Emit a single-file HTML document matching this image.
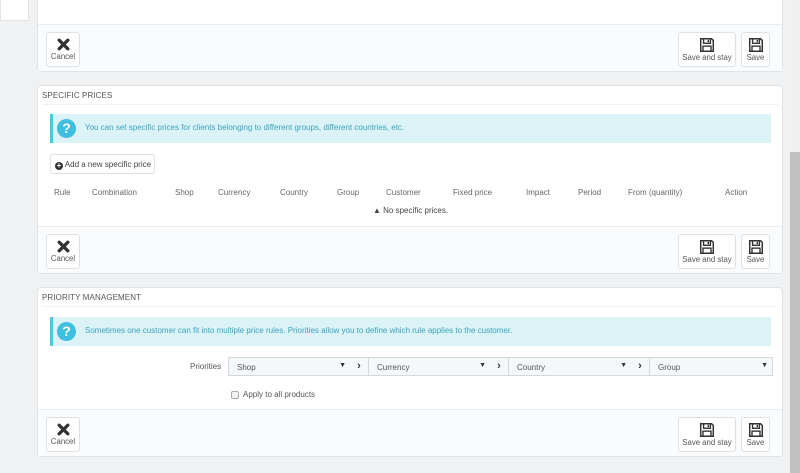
<!DOCTYPE html>
<html><head><style>
*{box-sizing:border-box;margin:0;padding:0}
body{width:800px;height:473px;background:#eff1f2;font-family:"Liberation Sans",sans-serif;font-size:8px;color:#555;position:relative;overflow:hidden}
.abs{position:absolute}
.panel{position:absolute;left:37px;width:746px;background:#fff;border:1px solid #dfe3e6;border-radius:4px}
.foot{position:absolute;left:0;right:0;bottom:0;background:#fafbfc;border-top:1px solid #eaedef}
.btn{position:absolute;background:#fff;border:1px solid #dde1e4;border-radius:3px;text-align:center;font-size:7.8px;color:#555}
.btn svg{display:block;margin:5px auto 1px}
.hdr{position:absolute;left:4px;top:5px;font-size:8px;letter-spacing:.1px;color:#555}
.hline{position:absolute;left:4px;right:4px;border-top:1px solid #eef0f2}
.alert{position:absolute;left:12px;width:721px;height:29px;background:#dbf2f7;border-left:3px solid #52c4dd;color:#3da4bb;font-size:8px}
.alert .q{position:absolute;left:4px;top:5px;width:19px;height:19px;border-radius:50%;background:#3ebfe0;color:#fff;font-weight:bold;font-size:14px;text-align:center;line-height:19px}
.alert span{position:absolute;left:32px;top:9px}
.th{position:absolute;top:188px;font-size:8px;color:#666}
.sel{position:absolute;top:357px;height:19px;background:#f4f8fb;border:1px solid #d3d8db;font-size:8px;color:#555;padding:5px 0 0 8px}
.sel b{position:absolute;right:4px;top:4px;font-size:7px;color:#333}
.arr{position:absolute;top:357px;width:18px;height:19px;background:#f4f8fb;border-top:1px solid #d3d8db;border-bottom:1px solid #d3d8db;font-weight:bold;color:#333;text-align:center;font-size:11px;line-height:17px}
</style></head><body>
<div class="abs" style="left:0;top:0;width:29px;height:21px;background:#fff;border:1px solid #dfe3e6;border-top:0"></div>
<div class="abs" style="left:790px;top:152px;width:10px;height:321px;background:#c1c1c1"></div>
<div class="abs" style="left:790px;top:0;width:10px;height:152px;background:#f0f0f0"></div>

<div class="panel" style="top:-5px;height:77px">
 <div class="foot" style="height:47px"></div>
</div>

<div class="panel" style="top:85px;height:189px">
 <div class="hdr">SPECIFIC PRICES</div>
 <div class="hline" style="top:18px"></div>
 <div class="alert" style="top:28px"><div class="q">?</div><span>You can set specific prices for clients belonging to different groups, different countries, etc.</span></div>
 <div class="abs" style="left:12px;top:68px;width:105px;height:20px;border:1px solid #dde1e4;border-radius:3px;font-size:8px;color:#444;padding:5px 0 0 4px;white-space:nowrap"><span style="display:inline-block;width:8px;height:8px;border-radius:50%;background:#333;color:#fff;font-size:8px;line-height:8px;text-align:center;font-weight:bold;vertical-align:-1px">+</span> Add a new specific price</div>
 <div class="foot" style="height:47px"></div>
</div>
<div class="th" style="left:54px">Rule</div>
<div class="th" style="left:92px">Combination</div>
<div class="th" style="left:175px">Shop</div>
<div class="th" style="left:218px">Currency</div>
<div class="th" style="left:280px">Country</div>
<div class="th" style="left:337px">Group</div>
<div class="th" style="left:386px">Customer</div>
<div class="th" style="left:453px">Fixed price</div>
<div class="th" style="left:526px">Impact</div>
<div class="th" style="left:578px">Period</div>
<div class="th" style="left:628px">From (quantity)</div>
<div class="th" style="left:725px">Action</div>
<div class="abs" style="left:373px;top:206px;font-size:8px;color:#444">&#9650; No specific prices.</div>

<div class="panel" style="top:287px;height:170px">
 <div class="hdr">PRIORITY MANAGEMENT</div>
 <div class="hline" style="top:18px"></div>
 <div class="alert" style="top:29px"><div class="q">?</div><span>Sometimes one customer can fit into multiple price rules. Priorities allow you to define which rule applies to the customer.</span></div>
 <div class="foot" style="height:47px"></div>
</div>
<div class="abs" style="left:190px;top:362px;font-size:8px;color:#555">Priorities</div>
<div class="sel" style="left:228px;width:123px">Shop<b>&#9660;</b></div>
<div class="arr" style="left:350px">&#8250;</div>
<div class="sel" style="left:368px;width:123px">Currency<b>&#9660;</b></div>
<div class="arr" style="left:490px">&#8250;</div>
<div class="sel" style="left:508px;width:124px">Country<b>&#9660;</b></div>
<div class="arr" style="left:631px">&#8250;</div>
<div class="sel" style="left:649px;width:124px">Group<b>&#9660;</b></div>
<div class="abs" style="left:231px;top:391px;width:8px;height:8px;border:1px solid #aaa;border-radius:2px;background:#f4f4f4"></div>
<div class="abs" style="left:243px;top:390px;font-size:8px;color:#555">Apply to all products</div>

<svg width="0" height="0" style="position:absolute"><defs>
<symbol id="x" viewBox="0 0 12 12"><path d="M2 2L10 10M10 2L2 10" stroke="#333" stroke-width="3" stroke-linecap="round"/></symbol>
<symbol id="f" viewBox="0 0 14 14"><path d="M1.5 1.5H11L12.5 3V12.5H1.5Z" fill="none" stroke="#333" stroke-width="1.3"/><rect x="4" y="1.5" width="6" height="4" fill="none" stroke="#333" stroke-width="1.2"/><rect x="7.5" y="2.5" width="1.3" height="2" fill="#333"/><rect x="3.5" y="8" width="7" height="4.5" fill="none" stroke="#333" stroke-width="1.2"/></symbol>
</defs></svg>
<div class="btn" style="left:46px;top:32px;width:34px;height:35px"><svg width="13" height="13"><use href="#x"/></svg>Cancel</div>
<div class="btn" style="left:678px;top:32px;width:58px;height:35px"><svg width="16" height="16" style="margin-top:4px;margin-bottom:0"><use href="#f"/></svg>Save and stay</div>
<div class="btn" style="left:741px;top:32px;width:29px;height:35px"><svg width="16" height="16" style="margin-top:4px;margin-bottom:0"><use href="#f"/></svg>Save</div>

<div class="btn" style="left:46px;top:234px;width:34px;height:35px"><svg width="13" height="13"><use href="#x"/></svg>Cancel</div>
<div class="btn" style="left:678px;top:234px;width:58px;height:35px"><svg width="16" height="16" style="margin-top:4px;margin-bottom:0"><use href="#f"/></svg>Save and stay</div>
<div class="btn" style="left:741px;top:234px;width:29px;height:35px"><svg width="16" height="16" style="margin-top:4px;margin-bottom:0"><use href="#f"/></svg>Save</div>

<div class="btn" style="left:46px;top:417px;width:34px;height:35px"><svg width="13" height="13"><use href="#x"/></svg>Cancel</div>
<div class="btn" style="left:678px;top:417px;width:58px;height:35px"><svg width="16" height="16" style="margin-top:4px;margin-bottom:0"><use href="#f"/></svg>Save and stay</div>
<div class="btn" style="left:741px;top:417px;width:29px;height:35px"><svg width="16" height="16" style="margin-top:4px;margin-bottom:0"><use href="#f"/></svg>Save</div>
</body></html>
